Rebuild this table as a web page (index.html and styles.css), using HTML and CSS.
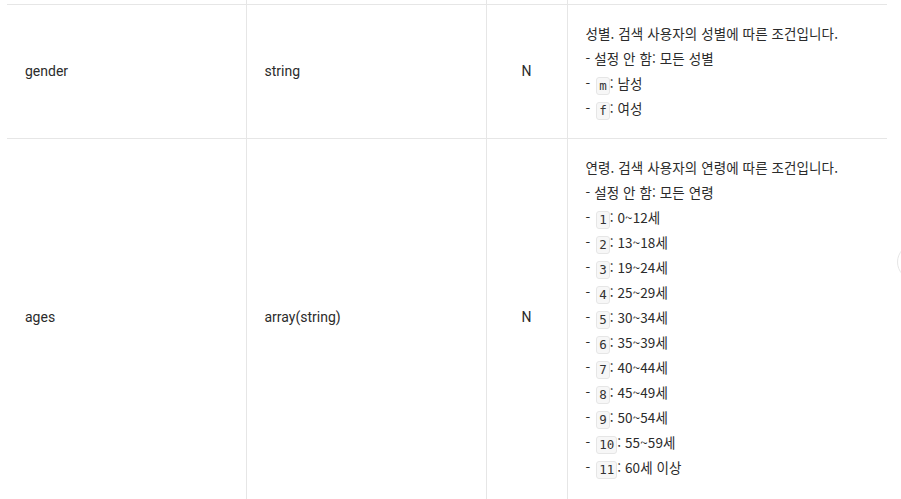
FILE: index.html
```html
<!DOCTYPE html>
<html lang="ko">
<head>
<meta charset="utf-8">
<link rel="stylesheet" href="styles.css">
</head>
<body>
<div class="page">
<table class="params">
  <colgroup>
    <col class="c-name"><col class="c-type"><col class="c-req"><col class="c-desc">
  </colgroup>
  <tbody>
    <tr class="prev"><td></td><td></td><td></td><td></td></tr>
    <tr>
      <td>gender</td>
      <td>string</td>
      <td class="req">N</td>
      <td class="desc">
        <p>성별. 검색 사용자의 성별에 따른 조건입니다.</p>
        <p>- 설정 안 함: 모든 성별</p>
        <p>- <code>m</code>: 남성</p>
        <p>- <code>f</code>: 여성</p>
      </td>
    </tr>
    <tr class="last">
      <td>ages</td>
      <td>array(string)</td>
      <td class="req">N</td>
      <td class="desc">
        <p>연령. 검색 사용자의 연령에 따른 조건입니다.</p>
        <p>- 설정 안 함: 모든 연령</p>
        <p>- <code>1</code>: 0~12세</p>
        <p>- <code>2</code>: 13~18세</p>
        <p>- <code>3</code>: 19~24세</p>
        <p>- <code>4</code>: 25~29세</p>
        <p>- <code>5</code>: 30~34세</p>
        <p>- <code>6</code>: 35~39세</p>
        <p>- <code>7</code>: 40~44세</p>
        <p>- <code>8</code>: 45~49세</p>
        <p>- <code>9</code>: 50~54세</p>
        <p>- <code>10</code>: 55~59세</p>
        <p>- <code>11</code>: 60세 이상</p>
      </td>
    </tr>
  </tbody>
</table>
<div class="float-btn"></div>
</div>
</body>
</html>
```
FILE: styles.css
```css
html, body {
  margin: 0;
  padding: 0;
  background: #fff;
  overflow: hidden;
}
.page {
  position: relative;
  padding-left: 7px;
  font-family: Roboto, "Noto Sans CJK KR", sans-serif;
  font-size: 14px;
  color: #2b2b2b;
}
.params {
  width: 880px;
  border-collapse: collapse;
  table-layout: fixed;
}
.c-name { width: 239px; }
.c-type { width: 240px; }
.c-req { width: 81px; }
.c-desc { width: 320px; }
.params td {
  border-top: 1px solid #e6e6e6;
  border-bottom: 1px solid #e6e6e6;
  border-left: 1px solid #e6e6e6;
  padding: 16px 18px 17px;
  vertical-align: middle;
  line-height: 25px;
}
.params td:first-child { border-left: none; }
.params tr.prev td {
  height: 4px;
  padding: 0;
  border-top: none;
  line-height: 0;
}
.params tr.last td { padding-bottom: 24px; }
.params td.req { text-align: center; }
.params td.desc {
  font-family: "Noto Sans CJK KR", sans-serif;
  font-size: 13.5px;
  letter-spacing: 0.1px;
  color: #2b2b2b;
}
.desc p {
  margin: 0;
  line-height: 25px;
  height: 25px;
  white-space: nowrap;
}
code {
  display: inline-block;
  font-family: "DejaVu Sans Mono", monospace;
  font-size: 12.5px;
  line-height: 16px;
  letter-spacing: 0;
  color: #333;
  background: #f7f7f7;
  border: 1px solid #e6e6e6;
  border-radius: 3px;
  padding: 0 2px;
  margin-left: 2px;
  vertical-align: -1px;
}
.float-btn {
  position: absolute;
  left: 897px;
  top: 244px;
  width: 36px;
  height: 36px;
  border-radius: 50%;
  border: 1px solid #e6e6e6;
  box-sizing: border-box;
}
```
